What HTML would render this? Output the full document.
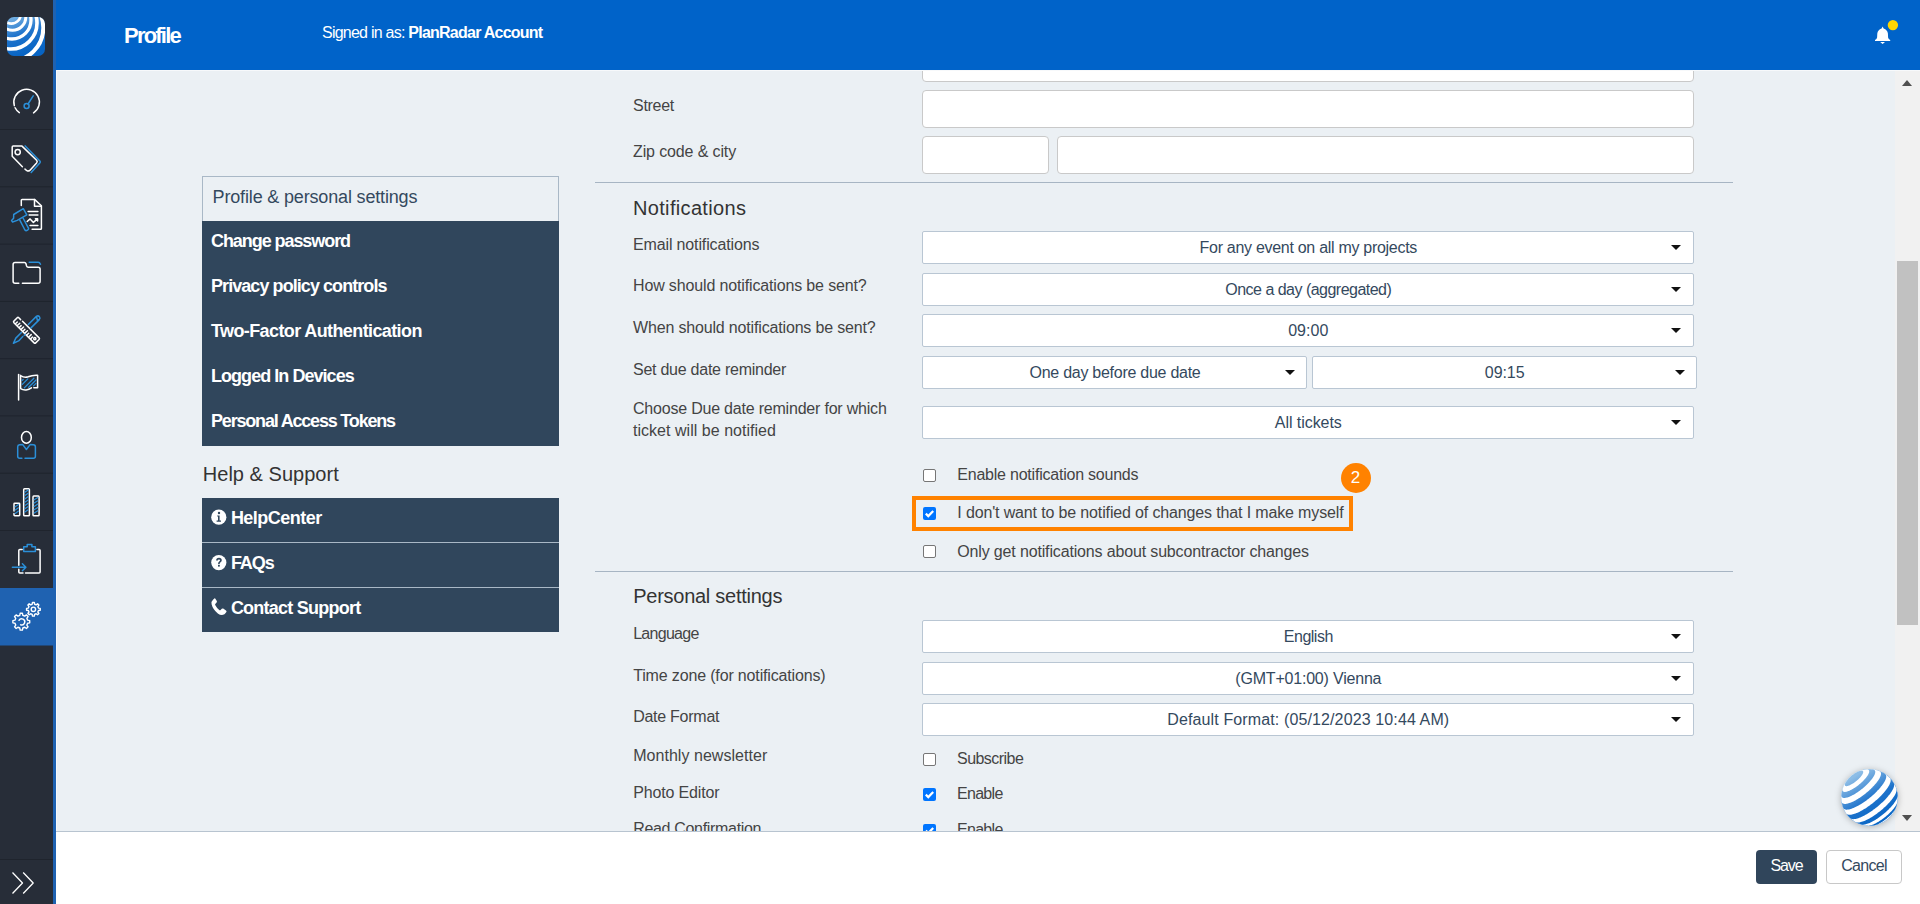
<!DOCTYPE html>
<html><head><meta charset="utf-8"><title>Profile</title>
<style>
*{box-sizing:border-box;margin:0;padding:0}
html,body{width:1920px;height:904px;overflow:hidden;background:#ebf0f4;font-family:"Liberation Sans",sans-serif}
.a{position:absolute}
.t{position:absolute;line-height:1;white-space:nowrap}
.t b{font-weight:700}
</style></head><body>
<div class="a" style="left:56px;top:0px;width:1864px;height:70px;background:#0063c9;z-index:5"></div>
<div class="a" style="left:202px;top:176px;width:357px;height:45px;border:1px solid #a9b8c6;border-bottom:none"></div>
<div class="a" style="left:202px;top:221px;width:357px;height:225px;background:#30465c"></div>
<div class="a" style="left:202px;top:498px;width:357px;height:134px;background:#30465c"></div>
<div class="a" style="left:202px;top:542px;width:357px;height:1px;background:#a9b8c6"></div>
<div class="a" style="left:202px;top:587px;width:357px;height:1px;background:#a9b8c6"></div>
<div class="a" style="left:595px;top:182px;width:1138px;height:1px;background:#a7b5c3"></div>
<div class="a" style="left:595px;top:571px;width:1138px;height:1px;background:#a7b5c3"></div>
<div class="a" style="left:922px;top:44px;width:772px;height:37.5px;background:#fff;border:1px solid #c9c9c9;border-radius:4px"></div>
<div class="a" style="left:922px;top:90px;width:772px;height:38px;background:#fff;border:1px solid #c9c9c9;border-radius:4px"></div>
<div class="a" style="left:922px;top:136px;width:127px;height:38px;background:#fff;border:1px solid #c9c9c9;border-radius:4px"></div>
<div class="a" style="left:1057px;top:136px;width:637px;height:38px;background:#fff;border:1px solid #c9c9c9;border-radius:4px"></div>
<div class="a" style="left:922px;top:231.3px;width:772px;height:33px;background:#fff;border:1px solid #b9c6d3;border-radius:2px"></div>
<div class="a" style="left:1671px;top:245.3px;width:0;height:0;border-left:5px solid transparent;border-right:5px solid transparent;border-top:5px solid #111"></div>
<div class="a" style="left:922px;top:273.3px;width:772px;height:33px;background:#fff;border:1px solid #b9c6d3;border-radius:2px"></div>
<div class="a" style="left:1671px;top:287.3px;width:0;height:0;border-left:5px solid transparent;border-right:5px solid transparent;border-top:5px solid #111"></div>
<div class="a" style="left:922px;top:314.3px;width:772px;height:33px;background:#fff;border:1px solid #b9c6d3;border-radius:2px"></div>
<div class="a" style="left:1671px;top:328.3px;width:0;height:0;border-left:5px solid transparent;border-right:5px solid transparent;border-top:5px solid #111"></div>
<div class="a" style="left:922px;top:406.3px;width:772px;height:33px;background:#fff;border:1px solid #b9c6d3;border-radius:2px"></div>
<div class="a" style="left:1671px;top:420.3px;width:0;height:0;border-left:5px solid transparent;border-right:5px solid transparent;border-top:5px solid #111"></div>
<div class="a" style="left:922px;top:620.3px;width:772px;height:33px;background:#fff;border:1px solid #b9c6d3;border-radius:2px"></div>
<div class="a" style="left:1671px;top:634.3px;width:0;height:0;border-left:5px solid transparent;border-right:5px solid transparent;border-top:5px solid #111"></div>
<div class="a" style="left:922px;top:661.6px;width:772px;height:33px;background:#fff;border:1px solid #b9c6d3;border-radius:2px"></div>
<div class="a" style="left:1671px;top:675.6px;width:0;height:0;border-left:5px solid transparent;border-right:5px solid transparent;border-top:5px solid #111"></div>
<div class="a" style="left:922px;top:703.4px;width:772px;height:33px;background:#fff;border:1px solid #b9c6d3;border-radius:2px"></div>
<div class="a" style="left:1671px;top:717.4px;width:0;height:0;border-left:5px solid transparent;border-right:5px solid transparent;border-top:5px solid #111"></div>
<div class="a" style="left:922px;top:356.3px;width:385px;height:33px;background:#fff;border:1px solid #b9c6d3;border-radius:2px"></div>
<div class="a" style="left:1285px;top:370.3px;width:0;height:0;border-left:5px solid transparent;border-right:5px solid transparent;border-top:5px solid #111"></div>
<div class="a" style="left:1312px;top:356.3px;width:385px;height:33px;background:#fff;border:1px solid #b9c6d3;border-radius:2px"></div>
<div class="a" style="left:1675px;top:370.3px;width:0;height:0;border-left:5px solid transparent;border-right:5px solid transparent;border-top:5px solid #111"></div>
<div class="a" style="left:923px;top:469px;width:13px;height:13px;background:#fff;border:1px solid #767676;border-radius:2px"></div>
<div class="a" style="left:923px;top:507px;width:13px;height:13px;background:#0075ff;border-radius:2px"><svg width="13" height="13" viewBox="0 0 13 13" style="display:block"><path d="M2.8 6.6 L5.3 9.1 L10.2 3.9" fill="none" stroke="#fff" stroke-width="2.2"/></svg></div>
<div class="a" style="left:923px;top:545px;width:13px;height:13px;background:#fff;border:1px solid #767676;border-radius:2px"></div>
<div class="a" style="left:923px;top:752.5px;width:13px;height:13px;background:#fff;border:1px solid #767676;border-radius:2px"></div>
<div class="a" style="left:923px;top:788.3px;width:13px;height:13px;background:#0075ff;border-radius:2px"><svg width="13" height="13" viewBox="0 0 13 13" style="display:block"><path d="M2.8 6.6 L5.3 9.1 L10.2 3.9" fill="none" stroke="#fff" stroke-width="2.2"/></svg></div>
<div class="a" style="left:923px;top:824.3px;width:13px;height:13px;background:#0075ff;border-radius:2px"><svg width="13" height="13" viewBox="0 0 13 13" style="display:block"><path d="M2.8 6.6 L5.3 9.1 L10.2 3.9" fill="none" stroke="#fff" stroke-width="2.2"/></svg></div>
<div class="a" style="left:912px;top:496px;width:441px;height:35px;border:4px solid #ff8200"></div>
<div class="a" style="left:1340.5px;top:462.5px;width:30px;height:30px;border-radius:50%;background:#ff8200"></div>
<div class="a" style="left:56px;top:831px;width:1864px;height:73px;background:#fff;border-top:1px solid #b8c4d0;z-index:5"></div>
<div class="a" style="left:1756px;top:850px;width:61px;height:34px;background:#30455b;border-radius:4px;z-index:5"></div>
<div class="a" style="left:1826px;top:850px;width:76px;height:34px;background:#fff;border:1px solid #c8c8c8;border-radius:4px;z-index:5"></div>
<div class="a" style="left:1895px;top:70px;width:25px;height:761px;background:#f1f1f1"></div>
<div class="a" style="left:1897px;top:261px;width:21px;height:364px;background:#c1c1c1"></div>
<div class="a" style="left:1902px;top:80px;width:0;height:0;border-left:5.5px solid transparent;border-right:5.5px solid transparent;border-bottom:6px solid #505050"></div>
<div class="a" style="left:1902px;top:815px;width:0;height:0;border-left:5.5px solid transparent;border-right:5.5px solid transparent;border-top:6px solid #505050"></div>
<svg class="a" style="left:1841px;top:769.2px;filter:drop-shadow(0 1px 3px rgba(0,0,0,0.25))" width="57" height="57" viewBox="0 0 57 57"><defs><linearGradient id="sg" gradientUnits="userSpaceOnUse" x1="14" y1="7" x2="44" y2="55"><stop offset="0" stop-color="#8dbde6"/><stop offset="0.5" stop-color="#1e73cb"/><stop offset="1" stop-color="#0564c4"/></linearGradient></defs><circle cx="28.50" cy="28.50" r="28.20" fill="url(#sg)"/>
<path d="M56.70 28.50 L56.66 29.98 L56.55 31.45 L56.35 32.91 L56.08 34.36 L55.74 35.80 L55.32 37.21 L54.83 38.61 L54.26 39.97 L53.63 41.30 L52.92 42.60 L52.15 43.86 L51.31 45.08 L50.42 46.25 L49.46 47.37 L48.44 48.44 L47.37 49.46 L46.25 50.42 L45.08 51.31 L43.86 52.15 L42.60 52.92 L41.30 53.63 L39.97 54.26 L38.61 54.83 L37.21 55.32 L35.80 55.74 L34.36 56.08 L32.91 56.35 L31.45 56.55 L29.98 56.66 L28.50 56.70 L27.02 56.66 L25.55 56.55 L24.09 56.35 L22.64 56.08 L21.20 55.74 L19.79 55.32 L18.39 54.83 L17.03 54.26 L15.70 53.63 L14.40 52.92 L13.14 52.15 L11.92 51.31 L10.75 50.42 L9.63 49.46 L8.56 48.44 L7.54 47.37 L6.58 46.25 L5.69 45.08 L4.85 43.86 L4.08 42.60 L3.37 41.30 L2.74 39.97 L2.17 38.61 L1.68 37.21 L1.26 35.80 L0.92 34.36 L0.65 32.91 L0.45 31.45 L0.34 29.98 L0.30 28.50 L0.34 27.02 L0.45 25.55 L0.65 24.09 L0.92 22.64 L1.26 21.20 L1.68 19.79 L2.17 18.39 L2.74 17.03 L3.37 15.70 L4.08 14.40 L4.85 13.14 L5.69 11.92 L6.58 10.75 L7.54 9.63 L8.56 8.56 L9.63 7.54 L10.75 6.58 L11.92 5.69 L13.14 4.85 L14.40 4.08 L15.70 3.37 L17.03 2.74 L18.39 2.17 L19.79 1.68 L21.20 1.26 L22.64 0.92 L24.09 0.65 L25.55 0.45 L27.02 0.34 L28.50 0.30 L29.98 0.34 L31.45 0.45 L32.91 0.65 L34.36 0.92 L35.80 1.26 L37.21 1.68 L38.61 2.17 L39.97 2.74 L41.30 3.37 L42.60 4.08 L43.86 4.85 L45.08 5.69 L46.25 6.58 L47.37 7.54 L48.44 8.56 L49.46 9.63 L50.42 10.75 L51.31 11.92 L52.15 13.14 L52.92 14.40 L53.63 15.70 L54.26 17.03 L54.83 18.39 L55.32 19.79 L55.74 21.20 L56.08 22.64 L56.35 24.09 L56.55 25.55 L56.66 27.02Z" fill="#fff"/>
<path d="M56.70 28.50 L56.66 29.98 L56.55 31.45 L56.35 32.91 L56.08 34.36 L55.74 35.80 L55.32 37.21 L54.83 38.61 L54.26 39.97 L53.63 41.30 L52.92 42.60 L52.15 43.86 L51.31 45.08 L50.42 46.25 L49.46 47.37 L48.44 48.44 L47.37 49.46 L46.25 50.42 L45.08 51.31 L43.86 52.15 L42.60 52.92 L41.30 53.63 L39.97 54.26 L38.61 54.83 L37.21 55.32 L35.80 55.74 L34.36 56.08 L32.91 56.35 L31.45 56.55 L29.98 56.66 L28.50 56.70 L27.02 56.66 L25.55 56.55 L24.09 56.35 L22.64 56.08 L21.20 55.74 L19.79 55.32 L18.39 54.83 L17.03 54.26 L15.70 53.63 L14.40 52.92 L13.14 52.15 L11.92 51.31 L10.75 50.42 L9.63 49.46 L8.56 48.44 L7.54 47.37 L6.58 46.25 L5.69 45.08 L4.85 43.86 L4.08 42.60 L3.37 41.30 L2.74 39.97 L2.17 38.61 L1.68 37.21 L1.26 35.80 L0.92 34.36 L0.65 32.91 L0.45 31.45 L0.34 29.98 L0.30 28.50 L0.34 27.02 L0.45 25.55 L0.65 24.09 L0.92 22.64 L1.26 21.20 L1.68 19.79 L2.17 18.39 L2.74 17.03 L3.37 15.70 L4.08 14.40 L4.85 13.14 L5.69 11.92 L6.58 10.75 L7.54 9.63 L8.56 8.56 L9.63 7.54 L10.75 6.58 L11.92 5.69 L13.14 4.85 L14.40 4.08 L15.70 3.37 L17.03 2.74 L18.39 2.17 L19.79 1.68 L21.20 1.26 L22.64 0.92 L24.09 0.65 L25.55 0.45 L27.02 0.34 L28.50 0.30 L29.98 0.34 L31.45 0.45 L32.91 0.65 L34.36 0.92 L35.80 1.26 L37.21 1.68 L38.61 2.17 L39.97 2.74 L41.30 3.37 L42.60 4.08 L43.86 4.85 L45.08 5.69 L46.25 6.58 L47.37 7.54 L48.44 8.56 L49.46 9.63 L50.42 10.75 L51.31 11.92 L52.15 13.14 L52.92 14.40 L53.63 15.70 L54.26 17.03 L54.83 18.39 L55.32 19.79 L55.74 21.20 L56.08 22.64 L56.35 24.09 L56.55 25.55 L56.66 27.02Z" fill="url(#sg)"/>
<path d="M49.81 46.97 L49.51 47.31 L49.19 47.66 L48.85 48.00 L48.51 48.35 L48.15 48.69 L47.79 49.04 L47.41 49.38 L47.03 49.71 L46.63 50.05 L46.24 50.38 L45.83 50.70 L45.43 51.01 L45.02 51.32 L44.61 51.61 L44.19 51.90 L43.78 52.18 L43.37 52.44 L42.97 52.70 L42.56 52.94 L42.16 53.17 L40.85 53.85 L39.50 54.46 L38.13 55.01 L36.72 55.47 L35.30 55.87 L33.85 56.19 L32.39 56.43 L30.92 56.60 L29.44 56.68 L27.96 56.69 L26.48 56.63 L25.01 56.48 L23.55 56.26 L22.10 55.96 L20.66 55.59 L19.25 55.14 L17.87 54.62 L16.51 54.02 L15.19 53.36 L13.90 52.63 L12.66 51.83 L11.45 50.96 L10.30 50.04 L9.19 49.05 L8.14 48.01 L7.15 46.92 L6.21 45.77 L5.33 44.58 L4.52 43.34 L3.78 42.06 L3.10 40.75 L2.49 39.40 L1.95 38.02 L1.49 36.61 L1.10 35.18 L0.79 33.73 L0.55 32.27 L0.39 30.80 L0.31 29.32 L0.31 27.84 L0.38 26.37 L0.53 24.89 L0.76 23.43 L1.06 21.98 L1.44 20.55 L1.90 19.14 L2.43 17.76 L3.03 16.41 L3.70 15.09 L4.43 13.80 L5.24 12.56 L6.11 11.36 L7.04 10.21 L8.03 9.11 L9.07 8.06 L10.17 7.07 L11.32 6.14 L12.52 5.27 L13.76 4.46 L15.04 3.72 L16.36 3.05 L17.71 2.45 L19.09 1.91 L20.50 1.46 L21.93 1.08 L23.38 0.77 L24.84 0.54 L26.31 0.38 L27.79 0.31 L29.27 0.31 L30.75 0.39 L32.22 0.55 L33.69 0.78 L35.13 1.09 L36.56 1.48 L37.97 1.94 L39.35 2.47 L40.70 3.08 L42.02 3.75 L43.30 4.49 L44.54 5.30 L45.73 6.18 L46.88 7.11 L47.98 8.11 L49.02 9.16 L50.01 10.26 L50.93 11.41 L51.80 12.61 L52.60 13.86 L53.34 15.14 L54.00 16.47 L54.60 17.82 L55.12 19.20 L55.58 20.61 L55.95 22.05 L56.25 23.50 L56.48 24.96 L56.62 26.43 L56.69 27.91 L56.69 29.39 L56.60 30.87 L56.44 32.34 L56.20 33.80 L55.88 35.25 L55.49 36.67 L55.02 38.08 L54.48 39.46 L53.87 40.81 L53.19 42.12 L52.44 43.40 L51.63 44.63 L50.75 45.82Z" fill="#fff"/>
<path d="M54.45 39.53 L54.26 39.95 L54.03 40.39 L53.77 40.85 L53.48 41.31 L53.17 41.79 L52.82 42.29 L52.45 42.79 L52.05 43.30 L51.62 43.82 L51.17 44.35 L50.70 44.88 L50.20 45.42 L49.69 45.95 L49.15 46.49 L48.60 47.02 L48.03 47.56 L47.45 48.08 L46.86 48.61 L46.25 49.12 L45.63 49.63 L45.01 50.13 L44.38 50.62 L43.74 51.09 L43.11 51.55 L42.47 52.00 L41.83 52.43 L41.20 52.84 L40.56 53.23 L39.94 53.61 L39.32 53.96 L38.71 54.29 L38.12 54.60 L37.53 54.88 L36.96 55.15 L36.41 55.38 L35.87 55.59 L35.35 55.78 L34.86 55.94 L34.38 56.07 L33.93 56.17 L32.47 56.42 L31.00 56.59 L29.52 56.68 L28.03 56.70 L26.55 56.63 L25.08 56.49 L23.61 56.27 L22.16 55.98 L20.73 55.61 L19.31 55.16 L17.93 54.64 L16.57 54.05 L15.24 53.39 L13.95 52.66 L12.70 51.86 L11.50 51.00 L10.34 50.07 L9.23 49.09 L8.18 48.05 L7.18 46.95 L6.24 45.81 L5.36 44.62 L4.54 43.38 L3.80 42.10 L3.12 40.78 L2.51 39.43 L1.97 38.05 L1.50 36.64 L1.11 35.21 L0.80 33.77 L0.56 32.30 L0.40 30.83 L0.31 29.35 L0.31 27.87 L0.38 26.39 L0.53 24.92 L0.76 23.45 L1.06 22.00 L1.44 20.57 L1.89 19.16 L2.42 17.77 L3.02 16.42 L3.69 15.10 L4.43 13.81 L5.23 12.57 L6.10 11.37 L7.03 10.21 L8.02 9.11 L9.07 8.06 L10.17 7.07 L11.32 6.14 L12.52 5.26 L13.76 4.46 L15.05 3.72 L16.37 3.04 L17.72 2.44 L19.10 1.91 L20.51 1.45 L21.95 1.07 L23.40 0.77 L24.86 0.54 L26.33 0.38 L27.81 0.31 L29.29 0.31 L30.77 0.39 L32.25 0.55 L33.71 0.79 L35.16 1.10 L36.59 1.49 L38.00 1.95 L39.38 2.48 L40.73 3.09 L42.05 3.77 L43.33 4.51 L44.57 5.33 L45.76 6.20 L46.91 7.14 L48.01 8.14 L49.05 9.19 L50.04 10.30 L50.96 11.45 L51.83 12.66 L52.63 13.90 L53.36 15.19 L54.03 16.51 L54.62 17.87 L55.14 19.26 L55.59 20.67 L55.97 22.11 L56.26 23.56 L56.48 25.02 L56.63 26.50 L56.70 27.98 L56.68 29.46 L56.59 30.94 L56.43 32.41 L56.18 33.87 L55.86 35.32 L55.47 36.75 L55.00 38.15Z" fill="url(#sg)"/>
<path d="M56.30 33.19 L56.17 33.66 L56.00 34.17 L55.78 34.70 L55.53 35.25 L55.23 35.82 L54.89 36.42 L54.52 37.03 L54.10 37.66 L53.65 38.30 L53.16 38.96 L52.63 39.63 L52.08 40.31 L51.49 41.00 L50.87 41.70 L50.22 42.40 L49.55 43.10 L48.85 43.80 L48.13 44.50 L47.38 45.20 L46.62 45.89 L45.84 46.57 L45.05 47.25 L44.24 47.91 L43.42 48.57 L42.60 49.20 L41.77 49.82 L40.93 50.43 L40.10 51.01 L39.26 51.57 L38.43 52.11 L37.61 52.63 L36.79 53.11 L35.98 53.58 L35.19 54.01 L34.40 54.41 L33.64 54.79 L32.89 55.13 L32.17 55.44 L31.47 55.72 L30.79 55.96 L30.14 56.17 L29.52 56.34 L28.92 56.47 L28.36 56.57 L27.83 56.64 L27.34 56.66 L25.86 56.58 L24.39 56.40 L22.93 56.14 L21.48 55.81 L20.06 55.41 L18.65 54.93 L17.28 54.37 L15.93 53.75 L14.62 53.05 L13.35 52.29 L12.12 51.46 L10.94 50.56 L9.80 49.61 L8.72 48.60 L7.69 47.53 L6.72 46.41 L5.81 45.24 L4.96 44.03 L4.18 42.77 L3.46 41.47 L2.81 40.13 L2.24 38.77 L1.73 37.37 L1.30 35.95 L0.95 34.51 L0.67 33.06 L0.47 31.59 L0.35 30.11 L0.30 28.63 L0.33 27.15 L0.44 25.67 L0.63 24.20 L0.90 22.74 L1.24 21.29 L1.65 19.87 L2.14 18.47 L2.71 17.10 L3.34 15.76 L4.05 14.45 L4.82 13.19 L5.66 11.96 L6.56 10.79 L7.52 9.66 L8.54 8.58 L9.61 7.56 L10.74 6.60 L11.92 5.69 L13.14 4.85 L14.40 4.08 L15.71 3.37 L17.04 2.73 L18.41 2.17 L19.81 1.67 L21.23 1.25 L22.68 0.91 L24.14 0.64 L25.61 0.45 L27.08 0.34 L28.57 0.30 L30.05 0.34 L31.53 0.46 L33.00 0.66 L34.45 0.94 L35.89 1.29 L37.31 1.71 L38.71 2.21 L40.08 2.79 L41.41 3.43 L42.71 4.14 L43.97 4.93 L45.19 5.77 L46.36 6.68 L47.49 7.65 L48.56 8.68 L49.57 9.76 L50.53 10.89 L51.42 12.07 L52.25 13.30 L53.02 14.57 L53.72 15.88 L54.35 17.22 L54.90 18.60 L55.39 20.00 L55.80 21.42 L56.13 22.87 L56.39 24.33 L56.57 25.80 L56.67 27.28 L56.70 28.76 L56.65 30.24 L56.52 31.72Z" fill="#fff"/>
<path d="M56.61 26.28 L56.62 26.74 L56.57 27.25 L56.47 27.78 L56.31 28.35 L56.11 28.95 L55.86 29.58 L55.55 30.23 L55.20 30.92 L54.80 31.62 L54.35 32.35 L53.85 33.10 L53.32 33.87 L52.73 34.65 L52.11 35.45 L51.45 36.26 L50.75 37.08 L50.01 37.91 L49.24 38.74 L48.44 39.57 L47.61 40.41 L46.75 41.24 L45.86 42.07 L44.95 42.89 L44.03 43.71 L43.08 44.51 L42.12 45.30 L41.15 46.08 L40.17 46.84 L39.18 47.57 L38.19 48.29 L37.20 48.99 L36.20 49.65 L35.21 50.30 L34.23 50.91 L33.26 51.49 L32.30 52.04 L31.35 52.56 L30.42 53.04 L29.51 53.48 L28.62 53.89 L27.76 54.26 L26.93 54.59 L26.12 54.87 L25.34 55.12 L24.60 55.33 L23.90 55.49 L23.23 55.61 L22.60 55.68 L22.02 55.71 L21.47 55.70 L20.97 55.65 L20.52 55.55 L19.11 55.09 L17.73 54.56 L16.38 53.96 L15.07 53.30 L13.79 52.56 L12.55 51.75 L11.35 50.89 L10.20 49.96 L9.11 48.97 L8.06 47.93 L7.07 46.83 L6.14 45.69 L5.27 44.49 L4.47 43.25 L3.73 41.98 L3.06 40.66 L2.46 39.31 L1.93 37.93 L1.47 36.53 L1.08 35.10 L0.78 33.66 L0.54 32.20 L0.39 30.73 L0.31 29.26 L0.31 27.78 L0.39 26.31 L0.54 24.84 L0.77 23.38 L1.07 21.94 L1.46 20.51 L1.91 19.11 L2.44 17.73 L3.04 16.38 L3.71 15.06 L4.45 13.78 L5.25 12.54 L6.12 11.35 L7.04 10.20 L8.03 9.10 L9.08 8.06 L10.17 7.07 L11.32 6.14 L12.51 5.27 L13.75 4.46 L15.03 3.73 L16.34 3.05 L17.69 2.45 L19.07 1.92 L20.48 1.47 L21.90 1.08 L23.35 0.78 L24.80 0.54 L26.27 0.39 L27.75 0.31 L29.22 0.31 L30.70 0.39 L32.17 0.54 L33.63 0.77 L35.07 1.08 L36.50 1.46 L37.90 1.91 L39.28 2.44 L40.63 3.04 L41.95 3.71 L43.22 4.45 L44.46 5.25 L45.66 6.12 L46.81 7.05 L47.90 8.04 L48.95 9.08 L49.94 10.18 L50.87 11.32 L51.73 12.52 L52.54 13.76 L53.28 15.04 L53.95 16.35 L54.55 17.70 L55.08 19.08 L55.54 20.48 L55.92 21.91 L56.23 23.35 L56.46 24.81Z" fill="url(#sg)"/>
<path d="M55.45 20.26 L55.51 20.74 L55.52 21.25 L55.46 21.81 L55.35 22.41 L55.18 23.04 L54.95 23.71 L54.67 24.41 L54.33 25.14 L53.94 25.90 L53.49 26.68 L52.99 27.50 L52.44 28.33 L51.84 29.19 L51.19 30.06 L50.50 30.95 L49.76 31.85 L48.98 32.76 L48.16 33.68 L47.30 34.61 L46.41 35.54 L45.48 36.47 L44.53 37.40 L43.54 38.32 L42.53 39.24 L41.50 40.14 L40.45 41.04 L39.38 41.92 L38.30 42.78 L37.20 43.62 L36.10 44.45 L35.00 45.25 L33.89 46.02 L32.79 46.76 L31.68 47.48 L30.59 48.16 L29.51 48.81 L28.44 49.42 L27.38 49.99 L26.35 50.53 L25.33 51.03 L24.35 51.48 L23.39 51.89 L22.46 52.25 L21.56 52.58 L20.70 52.85 L19.87 53.08 L19.09 53.26 L18.34 53.39 L17.64 53.47 L16.99 53.51 L16.38 53.50 L15.83 53.43 L15.32 53.32 L14.87 53.16 L13.57 52.43 L12.33 51.60 L11.13 50.72 L9.98 49.77 L8.89 48.76 L7.84 47.70 L6.86 46.58 L5.93 45.41 L5.07 44.19 L4.27 42.94 L3.55 41.64 L2.89 40.30 L2.30 38.93 L1.79 37.53 L1.35 36.11 L0.98 34.66 L0.69 33.20 L0.48 31.72 L0.35 30.24 L0.30 28.75 L0.33 27.26 L0.43 25.77 L0.62 24.30 L0.88 22.83 L1.21 21.38 L1.63 19.95 L2.12 18.54 L2.68 17.16 L3.32 15.81 L4.02 14.50 L4.80 13.23 L5.64 11.99 L6.54 10.81 L7.50 9.67 L8.53 8.59 L9.61 7.56 L10.74 6.60 L11.92 5.69 L13.15 4.84 L14.42 4.07 L15.73 3.36 L17.08 2.72 L18.45 2.15 L19.86 1.66 L21.29 1.24 L22.74 0.89 L24.21 0.63 L25.69 0.44 L27.17 0.33 L28.66 0.30 L30.15 0.35 L31.64 0.47 L33.11 0.68 L34.57 0.96 L36.02 1.32 L37.45 1.76 L38.85 2.27 L40.22 2.85 L41.56 3.50 L42.86 4.23 L44.12 5.02 L45.34 5.88 L46.51 6.80 L47.63 7.78 L48.70 8.82 L49.71 9.92 L50.66 11.06 L51.55 12.26 L52.38 13.50 L53.14 14.78 L53.83 16.10 L54.45 17.45 L54.99 18.84Z" fill="#fff"/>
<path d="M52.79 14.18 L52.98 14.59 L53.10 15.05 L53.17 15.55 L53.17 16.10 L53.11 16.68 L53.00 17.31 L52.82 17.98 L52.58 18.69 L52.28 19.42 L51.92 20.20 L51.51 21.00 L51.03 21.83 L50.51 22.69 L49.93 23.57 L49.29 24.47 L48.61 25.39 L47.88 26.33 L47.10 27.28 L46.27 28.25 L45.41 29.22 L44.50 30.20 L43.56 31.18 L42.58 32.16 L41.57 33.14 L40.53 34.12 L39.46 35.08 L38.37 36.04 L37.26 36.99 L36.13 37.91 L34.99 38.83 L33.84 39.72 L32.67 40.59 L31.51 41.43 L30.34 42.24 L29.17 43.03 L28.01 43.79 L26.85 44.51 L25.71 45.19 L24.58 45.84 L23.47 46.44 L22.37 47.01 L21.30 47.53 L20.26 48.01 L19.25 48.44 L18.26 48.83 L17.32 49.17 L16.41 49.46 L15.53 49.70 L14.71 49.89 L13.92 50.03 L13.18 50.12 L12.49 50.15 L11.85 50.14 L11.26 50.07 L10.73 49.96 L10.25 49.79 L9.83 49.57 L9.46 49.30 L8.39 48.27 L7.37 47.18 L6.41 46.04 L5.52 44.84 L4.69 43.60 L3.92 42.32 L3.22 41.01 L2.60 39.65 L2.05 38.27 L1.57 36.85 L1.16 35.42 L0.83 33.96 L0.58 32.49 L0.41 31.01 L0.32 29.52 L0.30 28.03 L0.37 26.54 L0.51 25.06 L0.73 23.58 L1.03 22.12 L1.41 20.68 L1.86 19.25 L2.38 17.86 L2.98 16.49 L3.65 15.16 L4.39 13.87 L5.20 12.61 L6.08 11.40 L7.01 10.24 L8.01 9.13 L9.06 8.07 L10.17 7.07 L11.33 6.13 L12.53 5.26 L13.78 4.44 L15.08 3.70 L16.41 3.03 L17.77 2.42 L19.16 1.89 L20.58 1.43 L22.03 1.05 L23.49 0.75 L24.96 0.52 L26.44 0.37 L27.93 0.31 L29.43 0.32 L30.92 0.40 L32.40 0.57 L33.87 0.82 L35.33 1.14 L36.76 1.54 L38.18 2.01 L39.56 2.56 L40.92 3.18 L42.24 3.87 L43.52 4.64 L44.76 5.46 L45.96 6.36 L47.11 7.31 L48.20 8.32 L49.24 9.39 L50.22 10.52 L51.14 11.69 L52.00 12.91Z" fill="url(#sg)"/>
<path d="M49.06 9.21 L49.31 9.58 L49.50 9.99 L49.62 10.45 L49.69 10.96 L49.69 11.51 L49.63 12.10 L49.51 12.74 L49.33 13.41 L49.09 14.12 L48.79 14.86 L48.43 15.64 L48.01 16.45 L47.54 17.28 L47.01 18.15 L46.42 19.03 L45.79 19.94 L45.10 20.87 L44.36 21.82 L43.57 22.77 L42.74 23.74 L41.87 24.72 L40.96 25.71 L40.01 26.70 L39.03 27.68 L38.01 28.67 L36.96 29.65 L35.89 30.63 L34.79 31.59 L33.67 32.54 L32.54 33.48 L31.39 34.40 L30.22 35.29 L29.05 36.17 L27.88 37.02 L26.70 37.84 L25.53 38.63 L24.36 39.39 L23.19 40.11 L22.04 40.80 L20.90 41.45 L19.78 42.07 L18.68 42.63 L17.61 43.16 L16.56 43.64 L15.53 44.08 L14.54 44.47 L13.59 44.81 L12.67 45.10 L11.80 45.34 L10.96 45.53 L10.17 45.68 L9.43 45.76 L8.73 45.80 L8.09 45.79 L7.50 45.72 L6.96 45.60 L6.48 45.44 L6.05 45.22 L5.68 44.95 L5.38 44.63 L4.55 43.39 L3.80 42.11 L3.12 40.80 L2.51 39.45 L1.97 38.07 L1.51 36.66 L1.11 35.23 L0.80 33.78 L0.56 32.32 L0.40 30.84 L0.31 29.36 L0.31 27.88 L0.38 26.40 L0.53 24.93 L0.75 23.46 L1.06 22.01 L1.44 20.58 L1.89 19.16 L2.42 17.78 L3.02 16.42 L3.69 15.10 L4.43 13.81 L5.23 12.57 L6.10 11.37 L7.03 10.22 L8.02 9.11 L9.07 8.06 L10.17 7.07 L11.32 6.14 L12.52 5.26 L13.76 4.46 L15.05 3.72 L16.37 3.04 L17.72 2.44 L19.11 1.91 L20.52 1.45 L21.95 1.07 L23.40 0.76 L24.87 0.54 L26.34 0.38 L27.82 0.31 L29.30 0.31 L30.78 0.39 L32.26 0.55 L33.72 0.79 L35.17 1.10 L36.60 1.49 L38.01 1.95 L39.39 2.49 L40.74 3.10 L42.06 3.78 L43.34 4.52 L44.58 5.34 L45.78 6.21 L46.93 7.15 L48.02 8.15Z" fill="#fff"/>
<path d="M44.33 5.19 L44.63 5.49 L44.87 5.85 L45.05 6.25 L45.17 6.69 L45.23 7.18 L45.24 7.71 L45.18 8.28 L45.07 8.88 L44.89 9.53 L44.66 10.21 L44.37 10.93 L44.03 11.67 L43.62 12.45 L43.17 13.25 L42.66 14.08 L42.10 14.94 L41.48 15.81 L40.82 16.70 L40.11 17.61 L39.36 18.53 L38.56 19.46 L37.72 20.40 L36.85 21.35 L35.93 22.30 L34.99 23.25 L34.01 24.19 L33.00 25.14 L31.97 26.07 L30.92 27.00 L29.84 27.91 L28.75 28.81 L27.65 29.69 L26.53 30.56 L25.41 31.40 L24.28 32.21 L23.15 33.00 L22.02 33.76 L20.89 34.49 L19.78 35.19 L18.67 35.85 L17.58 36.48 L16.50 37.06 L15.44 37.61 L14.41 38.12 L13.40 38.58 L12.42 39.00 L11.47 39.37 L10.55 39.70 L9.67 39.98 L8.83 40.21 L8.02 40.40 L7.27 40.53 L6.55 40.62 L5.88 40.65 L5.26 40.64 L4.70 40.58 L4.18 40.46 L3.72 40.30 L3.31 40.09 L2.95 39.83 L2.66 39.52 L2.42 39.17 L1.87 37.77 L1.41 36.34 L1.03 34.89 L0.73 33.42 L0.51 31.94 L0.37 30.44 L0.30 28.94 L0.32 27.44 L0.42 25.94 L0.59 24.45 L0.85 22.97 L1.18 21.51 L1.59 20.06 L2.08 18.64 L2.64 17.25 L3.28 15.89 L3.98 14.57 L4.76 13.28 L5.60 12.04 L6.51 10.84 L7.48 9.70 L8.51 8.61 L9.60 7.57 L10.74 6.60 L11.93 5.68 L13.17 4.83 L14.45 4.05 L15.77 3.34 L17.13 2.69 L18.52 2.13 L19.94 1.63 L21.38 1.21 L22.84 0.87 L24.32 0.61 L25.81 0.43 L27.31 0.33 L28.81 0.30 L30.31 0.36 L31.80 0.49 L33.29 0.71 L34.76 1.00 L36.21 1.38 L37.65 1.82 L39.05 2.35 L40.43 2.95 L41.77 3.62 L43.08 4.36Z" fill="url(#sg)"/>
<path d="M38.49 2.13 L38.86 2.32 L39.18 2.56 L39.45 2.84 L39.67 3.16 L39.84 3.53 L39.95 3.93 L40.01 4.38 L40.01 4.86 L39.96 5.38 L39.85 5.94 L39.70 6.52 L39.48 7.15 L39.22 7.80 L38.90 8.48 L38.54 9.19 L38.12 9.93 L37.65 10.68 L37.14 11.46 L36.58 12.26 L35.98 13.07 L35.33 13.90 L34.64 14.74 L33.91 15.59 L33.15 16.45 L32.35 17.32 L31.52 18.18 L30.65 19.05 L29.76 19.92 L28.84 20.78 L27.90 21.63 L26.94 22.48 L25.96 23.31 L24.96 24.13 L23.95 24.94 L22.93 25.73 L21.90 26.49 L20.87 27.24 L19.84 27.96 L18.81 28.65 L17.78 29.32 L16.76 29.95 L15.75 30.56 L14.75 31.13 L13.77 31.67 L12.80 32.17 L11.86 32.63 L10.94 33.05 L10.04 33.43 L9.17 33.77 L8.34 34.07 L7.53 34.33 L6.76 34.54 L6.03 34.71 L5.34 34.83 L4.69 34.91 L4.08 34.94 L3.51 34.93 L2.99 34.87 L2.52 34.77 L2.10 34.62 L1.72 34.43 L1.40 34.19 L1.13 33.91 L0.91 33.59 L0.75 33.23 L0.64 32.82 L0.44 31.33 L0.33 29.82 L0.30 28.31 L0.35 26.81 L0.48 25.30 L0.69 23.81 L0.98 22.33 L1.35 20.87 L1.80 19.42 L2.32 18.01 L2.92 16.62 L3.59 15.27 L4.34 13.96 L5.15 12.69 L6.03 11.46 L6.97 10.29 L7.98 9.16 L9.04 8.09 L10.16 7.08 L11.33 6.13 L12.55 5.24 L13.82 4.42 L15.13 3.67 L16.48 2.99 L17.86 2.39 L19.27 1.85 L20.71 1.40 L22.17 1.02 L23.65 0.72 L25.14 0.50 L26.64 0.36 L28.15 0.30 L29.66 0.32 L31.16 0.43 L32.66 0.61 L34.15 0.87 L35.62 1.21 L37.06 1.63Z" fill="#fff"/>
<path d="M32.18 0.54 L32.58 0.63 L32.95 0.76 L33.27 0.92 L33.54 1.13 L33.78 1.37 L33.96 1.64 L34.10 1.96 L34.20 2.31 L34.25 2.69 L34.25 3.10 L34.21 3.55 L34.12 4.03 L33.98 4.53 L33.80 5.07 L33.58 5.63 L33.30 6.21 L32.99 6.82 L32.63 7.45 L32.23 8.10 L31.79 8.77 L31.31 9.46 L30.79 10.16 L30.23 10.87 L29.64 11.59 L29.02 12.32 L28.36 13.06 L27.67 13.80 L26.96 14.54 L26.22 15.29 L25.45 16.03 L24.66 16.77 L23.85 17.51 L23.03 18.23 L22.18 18.95 L21.33 19.65 L20.46 20.35 L19.59 21.02 L18.70 21.68 L17.82 22.32 L16.93 22.94 L16.05 23.54 L15.16 24.11 L14.29 24.65 L13.42 25.17 L12.56 25.66 L11.72 26.12 L10.89 26.55 L10.08 26.95 L9.29 27.31 L8.52 27.64 L7.77 27.93 L7.05 28.19 L6.36 28.41 L5.70 28.59 L5.07 28.74 L4.48 28.84 L3.92 28.91 L3.39 28.94 L2.91 28.93 L2.46 28.88 L2.06 28.79 L1.69 28.66 L1.37 28.50 L1.10 28.29 L0.86 28.05 L0.68 27.78 L0.53 27.46 L0.44 27.12 L0.39 26.73 L0.39 26.32 L0.54 24.85 L0.77 23.39 L1.07 21.95 L1.45 20.52 L1.91 19.11 L2.44 17.73 L3.04 16.38 L3.71 15.07 L4.44 13.79 L5.25 12.55 L6.11 11.35 L7.04 10.20 L8.03 9.10 L9.07 8.06 L10.17 7.07 L11.32 6.14 L12.51 5.27 L13.75 4.46 L15.03 3.72 L16.35 3.05 L17.70 2.45 L19.08 1.92 L20.48 1.46 L21.91 1.08 L23.35 0.77 L24.81 0.54 L26.28 0.39 L27.76 0.31 L29.23 0.31 L30.71 0.39Z" fill="url(#sg)"/>
<path d="M25.44 0.47 L25.86 0.45 L26.24 0.45 L26.59 0.49 L26.91 0.56 L27.20 0.66 L27.45 0.79 L27.67 0.95 L27.86 1.14 L28.00 1.36 L28.11 1.61 L28.19 1.88 L28.23 2.19 L28.23 2.51 L28.20 2.87 L28.13 3.24 L28.02 3.64 L27.88 4.06 L27.70 4.51 L27.48 4.97 L27.23 5.45 L26.95 5.95 L26.64 6.46 L26.29 6.99 L25.91 7.53 L25.50 8.08 L25.06 8.64 L24.59 9.21 L24.10 9.79 L23.58 10.37 L23.04 10.96 L22.47 11.55 L21.89 12.14 L21.28 12.72 L20.66 13.31 L20.02 13.89 L19.37 14.46 L18.70 15.03 L18.03 15.58 L17.34 16.13 L16.65 16.66 L15.95 17.18 L15.26 17.69 L14.56 18.18 L13.86 18.65 L13.16 19.10 L12.47 19.53 L11.78 19.94 L11.11 20.33 L10.44 20.69 L9.78 21.03 L9.14 21.34 L8.52 21.63 L7.91 21.89 L7.32 22.12 L6.76 22.32 L6.21 22.50 L5.69 22.64 L5.19 22.75 L4.72 22.84 L4.28 22.89 L3.87 22.91 L3.48 22.91 L3.13 22.87 L2.81 22.80 L2.52 22.70 L2.27 22.56 L2.05 22.40 L1.87 22.21 L1.72 22.00 L1.61 21.75 L1.53 21.47 L1.49 21.17 L1.49 20.85 L1.53 20.49 L1.60 20.12 L1.70 19.72 L2.22 18.27 L2.82 16.85 L3.49 15.47 L4.24 14.12 L5.06 12.82 L5.95 11.57 L6.91 10.36 L7.93 9.21 L9.01 8.12 L10.15 7.09 L11.34 6.12 L12.59 5.22 L13.88 4.38 L15.22 3.62 L16.59 2.94 L18.01 2.33 L19.45 1.79 L20.92 1.34 L22.41 0.97 L23.92 0.67Z" fill="#fff"/>
<path d="M18.21 2.25 L18.60 2.11 L18.98 1.99 L19.34 1.89 L19.68 1.81 L20.00 1.75 L20.31 1.72 L20.59 1.70 L20.85 1.71 L21.10 1.73 L21.32 1.78 L21.51 1.85 L21.69 1.94 L21.84 2.05 L21.96 2.18 L22.07 2.33 L22.14 2.50 L22.19 2.69 L22.22 2.90 L22.22 3.12 L22.20 3.36 L22.15 3.62 L22.08 3.90 L21.98 4.19 L21.85 4.49 L21.71 4.81 L21.54 5.14 L21.34 5.48 L21.13 5.84 L20.89 6.20 L20.62 6.57 L20.34 6.95 L20.04 7.34 L19.72 7.73 L19.38 8.13 L19.03 8.53 L18.65 8.93 L18.26 9.33 L17.86 9.74 L17.44 10.14 L17.02 10.54 L16.58 10.94 L16.13 11.33 L15.67 11.72 L15.21 12.11 L14.74 12.48 L14.26 12.85 L13.78 13.21 L13.30 13.55 L12.82 13.89 L12.34 14.21 L11.86 14.52 L11.39 14.82 L10.92 15.10 L10.45 15.37 L9.99 15.62 L9.54 15.85 L9.10 16.07 L8.67 16.26 L8.25 16.44 L7.85 16.60 L7.46 16.74 L7.08 16.86 L6.73 16.96 L6.38 17.04 L6.06 17.09 L5.76 17.13 L5.47 17.15 L5.21 17.14 L4.97 17.11 L4.75 17.06 L4.55 17.00 L4.38 16.91 L4.23 16.80 L4.10 16.66 L4.00 16.51 L3.92 16.34 L3.87 16.16 L3.84 15.95 L3.84 15.72 L3.87 15.48 L3.91 15.22 L3.99 14.95 L4.09 14.66 L4.21 14.35 L4.36 14.04 L4.53 13.70 L4.72 13.36 L4.94 13.01 L5.84 11.71 L6.81 10.47 L7.86 9.29 L8.96 8.16 L10.13 7.10 L11.36 6.11 L12.64 5.18 L13.97 4.33 L15.34 3.56 L16.76 2.86Z" fill="url(#sg)"/></svg>
<svg class="a" style="left:0;top:0" width="240" height="640" viewBox="0 0 240 640"><circle cx="218.8" cy="517.2" r="7.6" fill="#fff"/><path d="M217.2 515.4 L219.6 515.4 L219.6 520.6 L221 520.6 L221 521.8 L216.6 521.8 L216.6 520.6 L218 520.6 L218 516.6 L217.2 516.6 Z" fill="#30465c"/><circle cx="219" cy="513" r="1.2" fill="#30465c"/><circle cx="218.8" cy="562.6" r="7.6" fill="#fff"/><path d="M216.1 560.6 Q216.2 557.8 219 557.8 Q221.8 557.9 221.8 560.2 Q221.8 561.6 220.3 562.4 Q219.7 562.8 219.7 563.9 L218.1 563.9 Q218 562.2 219.2 561.4 Q220.1 560.9 220.1 560.3 Q220 559.4 219 559.4 Q217.9 559.4 217.8 560.6 Z" fill="#30465c"/><rect x="218" y="564.8" width="1.8" height="1.8" fill="#30465c"/><path d="M213.2 599.6 Q211.2 601.3 211.6 604.2 Q212.8 609.3 217.8 613.4 Q220.4 615.3 223 614.8 Q224.6 614.4 225.6 613 L226.4 612 Q226.9 611.2 226 610.6 L223.2 608.6 Q222.4 608.1 221.8 608.8 L220.6 610 Q219.9 610.4 219.2 609.9 Q216.6 607.8 215.2 605 Q214.9 604.2 215.5 603.7 L216.6 602.6 Q217.2 601.9 216.8 601.1 L215.2 598.6 Q214.6 597.9 213.9 598.9 Z" fill="#fff"/></svg>
<div class="a" style="left:56px;top:70px;width:1864px;height:1px;background:#f7f9fb"></div>
<div class="a" style="left:56px;top:70px;width:1px;height:761px;background:#f7f9fb"></div>
<svg class="a" style="left:1860px;top:10px;z-index:6" width="50" height="45" viewBox="1860 10 50 45"><path d="M1882.6 26.6 L1883.6 28.4 Q1887.4 29.6 1887.9 33.6 L1888.1 37.4 Q1888.4 39 1890.2 39.9 L1890.2 40.9 L1875 40.9 L1875 39.9 Q1876.8 39 1877.1 37.4 L1877.3 33.6 Q1877.8 29.6 1881.6 28.4 Z" fill="#fff"/><path d="M1880.2 42.1 L1885 42.1 L1882.6 44 Z" fill="#fff"/><circle cx="1892.9" cy="25.1" r="5.2" fill="#ffd500"/></svg>
<svg class="a" style="left:0;top:0;z-index:7" width="56" height="904" viewBox="0 0 56 904">
<rect x="0" y="0" width="53" height="904" fill="#272d38"/>
<rect x="53" y="0" width="3" height="904" fill="#1f62b1"/>
<rect x="0" y="129.0" width="53" height="1" fill="#1f242d"/>
<rect x="0" y="186.3" width="53" height="1" fill="#1f242d"/>
<rect x="0" y="243.6" width="53" height="1" fill="#1f242d"/>
<rect x="0" y="300.9" width="53" height="1" fill="#1f242d"/>
<rect x="0" y="358.2" width="53" height="1" fill="#1f242d"/>
<rect x="0" y="415.4" width="53" height="1" fill="#1f242d"/>
<rect x="0" y="472.7" width="53" height="1" fill="#1f242d"/>
<rect x="0" y="530.0" width="53" height="1" fill="#1f242d"/>
<rect x="0" y="588" width="56" height="57.5" fill="#1f62b1"/>
<rect x="0" y="859" width="53" height="1" fill="#1f242d"/>
<defs><clipPath id="lc"><rect x="7" y="17" width="38" height="39" rx="7"/></clipPath>
<linearGradient id="lg" x1="0" y1="0" x2="0.35" y2="1"><stop offset="0" stop-color="#7db6e4"/><stop offset="0.5" stop-color="#1f74cc"/><stop offset="1" stop-color="#0764c4"/></linearGradient>
<clipPath id="sc"><circle cx="1869" cy="798" r="28.3"/></clipPath>
<linearGradient id="sg" x1="0" y1="0" x2="1" y2="1"><stop offset="0" stop-color="#9cc6ea"/><stop offset="0.45" stop-color="#3a86d2"/><stop offset="1" stop-color="#0a63c2"/></linearGradient>
</defs>
<g clip-path="url(#lc)"><rect x="7" y="17" width="38" height="39" fill="url(#lg)"/>
<circle cx="11.4" cy="14.3" r="9.3" fill="none" stroke="#fff" stroke-width="2.7"/>
<circle cx="12.5" cy="17.0" r="13.3" fill="none" stroke="#fff" stroke-width="3.0"/>
<circle cx="12.0" cy="20.0" r="19.0" fill="none" stroke="#fff" stroke-width="3.3"/>
<circle cx="11.0" cy="23.0" r="26.0" fill="none" stroke="#fff" stroke-width="3.6"/>
<circle cx="10.0" cy="27.8" r="33.3" fill="none" stroke="#fff" stroke-width="4.0"/>
</g>
<g fill="none" stroke-width="1.5" stroke-linecap="round" stroke-linejoin="round"><path d="M33.57 112.84 A12.8 12.8 0 1 0 14.3 105.63 M15.1 107.71 A12.8 12.8 0 0 0 19.33 112.64" stroke="#ffffff"/><circle cx="26.6" cy="106.1" r="2.5" stroke="#2b8fd8"/><path d="M28.0 104.0 L33.2 95.9" stroke="#2b8fd8"/></g>
<g fill="none" stroke-width="1.5" stroke-linecap="round" stroke-linejoin="round"><path d="M25 169.1 L26.9 170.7 Q28.4 171.6 29.8 170.4 L36.6 163 Q37.8 161.6 36.6 160.3 L22 146.1 L13.2 146.1 Q12.2 146.1 12.2 147.1 L12.2 156.3 L22.4 166.7" stroke="#ffffff"/><circle cx="17.7" cy="152.1" r="2.6" stroke="#ffffff"/><path d="M25.2 145.9 L40.1 161.3 Q40.6 162 40 162.7 L31.2 172.4" stroke="#2b8fd8"/></g>
<g fill="none" stroke-width="1.5" stroke-linecap="round" stroke-linejoin="round"><path d="M21.3 205.6 L21.3 200.2 Q21.3 199.4 22.1 199.4 L34.5 199.4 L41.4 205.8 L41.4 228.5 Q41.4 229.3 40.6 229.3 L32.1 229.3" stroke="#ffffff"/><path d="M34.5 199.6 L34.5 206.3 L41.2 206.3" stroke="#ffffff"/><path d="M28.1 211.6 L37.9 211.6 M29.2 214.9 L37.9 214.9 M30.1 225.5 L37.9 225.5" stroke="#ffffff"/><path d="M27.2 221.5 L30.1 218.9 L33.4 222.4 L37.4 218.9 M35.4 218.7 L37.6 218.7 L37.6 220.9" stroke="#ffffff"/><path d="M13.7 214.5 L23.3 208.7 L26.8 214.9 L17.2 220.4 L12.6 222 L11.6 220.6 L13.6 218.3 Z" stroke="#2b8fd8"/><path d="M19.7 219.8 L24.9 230 Q25.8 231 27.2 230.4 Q28.9 229.6 28.6 228.4 L23 218" stroke="#2b8fd8"/></g>
<g fill="none" stroke-width="1.5" stroke-linecap="round" stroke-linejoin="round"><path d="M18.8 283.3 L15.1 283.3 Q13.1 283.3 13.1 281.3 L13.1 264.5 Q13.1 262.5 15.1 262.5 L24.5 262.5 Q25.6 262.5 26 263.8 L26.6 266 Q27 267.2 28.2 267.2 L38.1 267.2 Q40.1 267.2 40.1 269.2 L40.1 281.3 Q40.1 283.3 38.1 283.3 L22.4 283.3" stroke="#ffffff"/><path d="M29.2 262.3 L38.3 262.3 Q39.6 262.3 40.5 264.3" stroke="#2b8fd8"/></g>
<g fill="none" stroke-width="1.5" stroke-linecap="round" stroke-linejoin="round"><path d="M20.6 319.6 L18.8 317.8 Q18 317 17.2 317.8 L13.9 321.1 Q13.1 321.9 13.9 322.7 L34.1 342.9 Q34.9 343.7 35.7 342.9 L39.1 339.5 Q39.9 338.7 39.1 337.9 L22.5 321.3" stroke="#ffffff"/><path d="M15.7 323.5 L17.3 322 M17.6 325.3 L19.8 323.2 M19.5 327.2 L21.1 325.6 M21.4 329.1 L23.6 327 M23.3 331 L24.9 329.4 M25.2 332.9 L27.4 330.8 M27.1 334.8 L28.7 333.2 M29 336.7 L31.2 334.6 M30.9 338.6 L32.5 337" stroke="#ffffff"/><circle cx="34.8" cy="338.7" r="1.1" stroke="#ffffff"/><path d="M28.3 324.5 L36.4 316.4 Q38 315.2 39.4 316.6 Q40.6 318.1 39.3 319.6 L31 327.9 M21.4 332.5 L15.8 338.1 L13.4 343.2 L18.6 340.9 L22.8 336.6 M24.2 335.2 L25.2 334.2 M36.5 316.5 L37.4 320.3 L39.4 319.4" stroke="#2b8fd8"/></g>
<g fill="none" stroke-width="1.5" stroke-linecap="round" stroke-linejoin="round"><path d="M18.6 374.4 L18.6 400.1" stroke="#ffffff"/><path d="M20.6 375.5 Q24.3 378.2 28.1 376.8 Q32.3 374.9 37.6 375.2 L37.6 387.8 L33.8 387.8 M31.4 387.8 Q28.9 389.6 26.2 389.9 Q23.1 390.2 20.6 388.6 L20.6 375.5" stroke="#ffffff"/><path d="M22.2 380.3 L23.2 379.4 M22.3 384.4 L27.8 378.9 M24.3 387.9 L33.9 378.3 M28.7 387.3 L36 380 M33.5 385.9 L36 383.4" stroke="#2b8fd8" stroke-width="1.3"/></g>
<g fill="none" stroke-width="1.5" stroke-linecap="round" stroke-linejoin="round"><ellipse cx="26.4" cy="437.4" rx="4.9" ry="5.9" stroke="#ffffff"/><path d="M21.9 458.2 L19.7 458.2 Q17.7 458.2 17.7 456.2 L17.7 446.7 Q17.7 444.9 19.5 444.7 L22.6 444.4 L26.4 449.5 L30.3 444.4 L33.4 444.7 Q35.4 444.9 35.4 446.9 L35.4 456.2 Q35.4 458.2 33.4 458.2 L25 458.2" stroke="#2b8fd8"/></g>
<g fill="none" stroke-width="1.5" stroke-linecap="round" stroke-linejoin="round"><path d="M14 511 L14 503.9 Q14 503.2 14.7 503.2 L19 503.2 Q19.7 503.2 19.7 503.9 L19.7 515 Q19.7 515.7 19 515.7 L14.7 515.7 Q14 515.7 14 515 L14 513.5" stroke="#ffffff"/><rect x="23.7" y="488.8" width="5.7" height="26.9" rx="0.8" stroke="#ffffff"/><rect x="33" y="496.1" width="6.1" height="19.6" rx="0.8" stroke="#ffffff"/></g>
<g fill="none" stroke-width="1.5" stroke-linecap="round" stroke-linejoin="round"><path d="M15.2 506.8 L18.5 504.5 M15.2 510.1 L18.5 507.8 M15.2 513.4 L18.5 511.1 M24.9 492.3 L28.2 490.0 M24.9 495.6 L28.2 493.3 M24.9 498.9 L28.2 496.6 M24.9 502.2 L28.2 499.9 M24.9 505.5 L28.2 503.2 M24.9 508.8 L28.2 506.5 M24.9 512.1 L28.2 509.8 M34.2 499.8 L37.8 497.5 M34.2 503.1 L37.8 500.8 M34.2 506.4 L37.8 504.1 M34.2 509.7 L37.8 507.4 M34.2 513.0 L37.8 510.7 " stroke="#2b8fd8" stroke-width="1.2"/></g>
<g fill="none" stroke-width="1.5" stroke-linecap="round" stroke-linejoin="round"><path d="M22.2 549.6 L19.8 549.6 Q18.8 549.6 18.8 550.6 L18.8 565.2 M18.8 569.3 L18.8 572.1 Q18.8 573.1 19.8 573.1 L23 573.1 M25.5 573.1 L39.1 573.1 Q40.1 573.1 40.1 572.1 L40.1 550.6 Q40.1 549.6 39.1 549.6 L36.9 549.6" stroke="#ffffff"/><path d="M23.7 551.6 L23.7 546.7 L27.2 546.7 L27.2 544.5 L31.9 544.5 L31.9 546.7 L35.4 546.7 L35.4 551.6 Z" stroke="#2b8fd8"/><path d="M12.4 567.3 L25.7 567.3 M22.4 563.8 L25.9 567.3 L22.4 570.8" stroke="#2b8fd8"/></g>
<g fill="none" stroke-width="1.5" stroke-linecap="round" stroke-linejoin="round"><path d="M19.78 615.38 L20.17 613.28 L22.43 613.28 L22.82 615.38 L24.70 616.16 L26.46 614.94 L28.06 616.54 L26.84 618.30 L27.62 620.18 L29.72 620.57 L29.72 622.83 L27.62 623.22 L26.84 625.10 L28.06 626.86 L26.46 628.46 L24.70 627.24 L22.82 628.02 L22.43 630.12 L20.17 630.12 L19.78 628.02 L17.90 627.24 L16.14 628.46 L14.54 626.86 L15.76 625.10 L14.98 623.22 L12.88 622.83 L12.88 620.57 L14.98 620.18 L15.76 618.30 L14.54 616.54 L16.14 614.94 L17.90 616.16 Z" stroke="#ffffff" stroke-width="1.4"/><path d="M19 620.3 A3.1 3.1 0 1 1 20.6 624.8" stroke="#ffffff" stroke-width="1.4"/><path d="M32.19 604.24 L32.48 602.46 L34.32 602.46 L34.61 604.24 L36.12 604.87 L37.59 603.81 L38.89 605.11 L37.83 606.58 L38.46 608.09 L40.24 608.38 L40.24 610.22 L38.46 610.51 L37.83 612.02 L38.89 613.49 L37.59 614.79 L36.12 613.73 L34.61 614.36 L34.32 616.14 L32.48 616.14 L32.19 614.36 L30.68 613.73 L29.21 614.79 L27.91 613.49 L28.97 612.02 L28.34 610.51 L26.56 610.22 L26.56 608.38 L28.34 608.09 L28.97 606.58 L27.91 605.11 L29.21 603.81 L30.68 604.87 Z" stroke="#ffffff" stroke-width="1.4"/><circle cx="33.4" cy="609.3" r="2.2" stroke="#ffffff" stroke-width="1.4"/></g>
<g fill="none" stroke-width="1.5" stroke-linecap="round" stroke-linejoin="round"><path d="M12.5 872.5 L22.5 883 L12.5 893.5 M23.2 872.5 L33.2 883 L23.2 893.5" stroke="#ffffff" stroke-width="1.3" stroke-linecap="butt"/></g>
</svg>
<div class="t" style="top:25.38px;font-size:22px;color:#fff;font-weight:700;letter-spacing:-1.786px;z-index:6;left:124.00px;"><span id="h_profile">Profile</span></div>
<div class="t" style="top:25.46px;font-size:16px;color:#fff;letter-spacing:-0.761px;z-index:6;left:322.00px;"><span id="h_signed">Signed in as: <b>PlanRadar Account</b></span></div>
<div class="t" style="top:187.76px;font-size:18px;color:#34495e;letter-spacing:-0.163px;left:212.60px;"><span id="n_profile">Profile &amp; personal settings</span></div>
<div class="t" style="top:231.76px;font-size:18px;color:#fff;font-weight:700;letter-spacing:-1.067px;left:211.00px;"><span id="n_d0">Change password</span></div>
<div class="t" style="top:276.76px;font-size:18px;color:#fff;font-weight:700;letter-spacing:-0.935px;left:211.00px;"><span id="n_d1">Privacy policy controls</span></div>
<div class="t" style="top:321.76px;font-size:18px;color:#fff;font-weight:700;letter-spacing:-0.608px;left:211.00px;"><span id="n_d2">Two-Factor Authentication</span></div>
<div class="t" style="top:366.76px;font-size:18px;color:#fff;font-weight:700;letter-spacing:-0.959px;left:211.00px;"><span id="n_d3">Logged In Devices</span></div>
<div class="t" style="top:411.76px;font-size:18px;color:#fff;font-weight:700;letter-spacing:-1.191px;left:211.00px;"><span id="n_d4">Personal Access Tokens</span></div>
<div class="t" style="top:464.07px;font-size:20px;color:#333;letter-spacing:0.021px;left:202.80px;"><span id="n_help">Help &amp; Support</span></div>
<div class="t" style="top:508.76px;font-size:18px;color:#fff;font-weight:700;letter-spacing:-0.530px;left:230.90px;"><span id="n_hc">HelpCenter</span></div>
<div class="t" style="top:553.76px;font-size:18px;color:#fff;font-weight:700;letter-spacing:-1.075px;left:230.90px;"><span id="n_faq">FAQs</span></div>
<div class="t" style="top:598.76px;font-size:18px;color:#fff;font-weight:700;letter-spacing:-0.767px;left:230.90px;"><span id="n_cs">Contact Support</span></div>
<div class="t" style="top:98.06px;font-size:16px;color:#444;letter-spacing:-0.283px;left:633.00px;"><span id="l_street">Street</span></div>
<div class="t" style="top:143.86px;font-size:16px;color:#444;letter-spacing:-0.127px;left:633.00px;"><span id="l_zip">Zip code &amp; city</span></div>
<div class="t" style="top:197.57px;font-size:20px;color:#333;letter-spacing:0.331px;left:633.00px;"><span id="s_notif">Notifications</span></div>
<div class="t" style="top:237.06px;font-size:16px;color:#444;letter-spacing:-0.142px;left:633.00px;"><span id="l_email">Email notifications</span></div>
<div class="t" style="top:278.36px;font-size:16px;color:#444;letter-spacing:-0.145px;left:633.00px;"><span id="l_how">How should notifications be sent?</span></div>
<div class="t" style="top:319.76px;font-size:16px;color:#444;letter-spacing:-0.165px;left:633.00px;"><span id="l_when">When should notifications be sent?</span></div>
<div class="t" style="top:361.86px;font-size:16px;color:#444;letter-spacing:-0.252px;left:633.00px;"><span id="l_set">Set due date reminder</span></div>
<div class="t" style="top:400.76px;font-size:16px;color:#444;letter-spacing:-0.206px;left:633.00px;"><span id="l_choose1">Choose Due date reminder for which</span></div>
<div class="t" style="top:422.66px;font-size:16px;color:#444;letter-spacing:0.030px;left:633.00px;"><span id="l_choose2">ticket will be notified</span></div>
<div class="t" style="top:467.06px;font-size:16px;color:#444;letter-spacing:-0.223px;left:957.30px;"><span id="c_sounds">Enable notification sounds</span></div>
<div class="t" style="top:505.26px;font-size:16px;color:#444;letter-spacing:-0.144px;left:957.30px;"><span id="c_dont">I don't want to be notified of changes that I make myself</span></div>
<div class="t" style="top:543.86px;font-size:16px;color:#444;letter-spacing:-0.154px;left:957.30px;"><span id="c_only">Only get notifications about subcontractor changes</span></div>
<div class="t" style="top:585.97px;font-size:20px;color:#333;letter-spacing:-0.259px;left:633.20px;"><span id="s_pers">Personal settings</span></div>
<div class="t" style="top:626.36px;font-size:16px;color:#444;letter-spacing:-0.725px;left:633.20px;"><span id="l_lang">Language</span></div>
<div class="t" style="top:667.56px;font-size:16px;color:#444;letter-spacing:-0.155px;left:633.20px;"><span id="l_tz">Time zone (for notifications)</span></div>
<div class="t" style="top:709.36px;font-size:16px;color:#444;letter-spacing:-0.264px;left:633.20px;"><span id="l_df">Date Format</span></div>
<div class="t" style="top:748.26px;font-size:16px;color:#444;letter-spacing:0.039px;left:633.20px;"><span id="l_news">Monthly newsletter</span></div>
<div class="t" style="top:784.66px;font-size:16px;color:#444;letter-spacing:-0.150px;left:633.20px;"><span id="l_photo">Photo Editor</span></div>
<div class="t" style="top:820.66px;font-size:16px;color:#444;letter-spacing:-0.318px;left:633.20px;"><span id="l_read">Read Confirmation</span></div>
<div class="t" style="top:750.56px;font-size:16px;color:#444;letter-spacing:-0.544px;left:957.00px;"><span id="c_sub">Subscribe</span></div>
<div class="t" style="top:786.46px;font-size:16px;color:#444;letter-spacing:-0.700px;left:957.00px;"><span id="c_en1">Enable</span></div>
<div class="t" style="top:822.46px;font-size:16px;color:#444;letter-spacing:-0.700px;left:957.00px;"><span id="c_en2">Enable</span></div>
<div class="t" style="top:240.36px;font-size:16px;color:#34495e;letter-spacing:-0.291px;left:1308.30px;width:0;display:flex;justify-content:center;"><span id="v_email">For any event on all my projects</span></div>
<div class="t" style="top:282.06px;font-size:16px;color:#34495e;letter-spacing:-0.517px;left:1308.30px;width:0;display:flex;justify-content:center;"><span id="v_how">Once a day (aggregated)</span></div>
<div class="t" style="top:323.26px;font-size:16px;color:#34495e;letter-spacing:0.060px;left:1308.30px;width:0;display:flex;justify-content:center;"><span id="v_when">09:00</span></div>
<div class="t" style="top:365.36px;font-size:16px;color:#34495e;letter-spacing:-0.261px;left:1115.00px;width:0;display:flex;justify-content:center;"><span id="v_rem1">One day before due date</span></div>
<div class="t" style="top:365.36px;font-size:16px;color:#34495e;letter-spacing:-0.060px;left:1504.70px;width:0;display:flex;justify-content:center;"><span id="v_rem2">09:15</span></div>
<div class="t" style="top:415.36px;font-size:16px;color:#34495e;letter-spacing:-0.055px;left:1308.30px;width:0;display:flex;justify-content:center;"><span id="v_all">All tickets</span></div>
<div class="t" style="top:629.36px;font-size:16px;color:#34495e;letter-spacing:-0.500px;left:1308.30px;width:0;display:flex;justify-content:center;"><span id="v_lang">English</span></div>
<div class="t" style="top:670.56px;font-size:16px;color:#34495e;letter-spacing:-0.200px;left:1308.30px;width:0;display:flex;justify-content:center;"><span id="v_tz">(GMT+01:00) Vienna</span></div>
<div class="t" style="top:712.36px;font-size:16px;color:#34495e;letter-spacing:0.122px;left:1308.30px;width:0;display:flex;justify-content:center;"><span id="v_df">Default Format: (05/12/2023 10:44 AM)</span></div>
<div class="t" style="top:858.06px;font-size:16px;color:#fff;letter-spacing:-1.075px;z-index:6;left:1786.50px;width:0;display:flex;justify-content:center;"><span id="b_save">Save</span></div>
<div class="t" style="top:858.06px;font-size:16px;color:#34495e;letter-spacing:-0.700px;z-index:6;left:1864.00px;width:0;display:flex;justify-content:center;"><span id="b_cancel">Cancel</span></div>
<div class="t" style="top:469.11px;font-size:17px;color:#fff;left:1355.50px;width:0;display:flex;justify-content:center;"><span id="badge2">2</span></div>
</body></html>
